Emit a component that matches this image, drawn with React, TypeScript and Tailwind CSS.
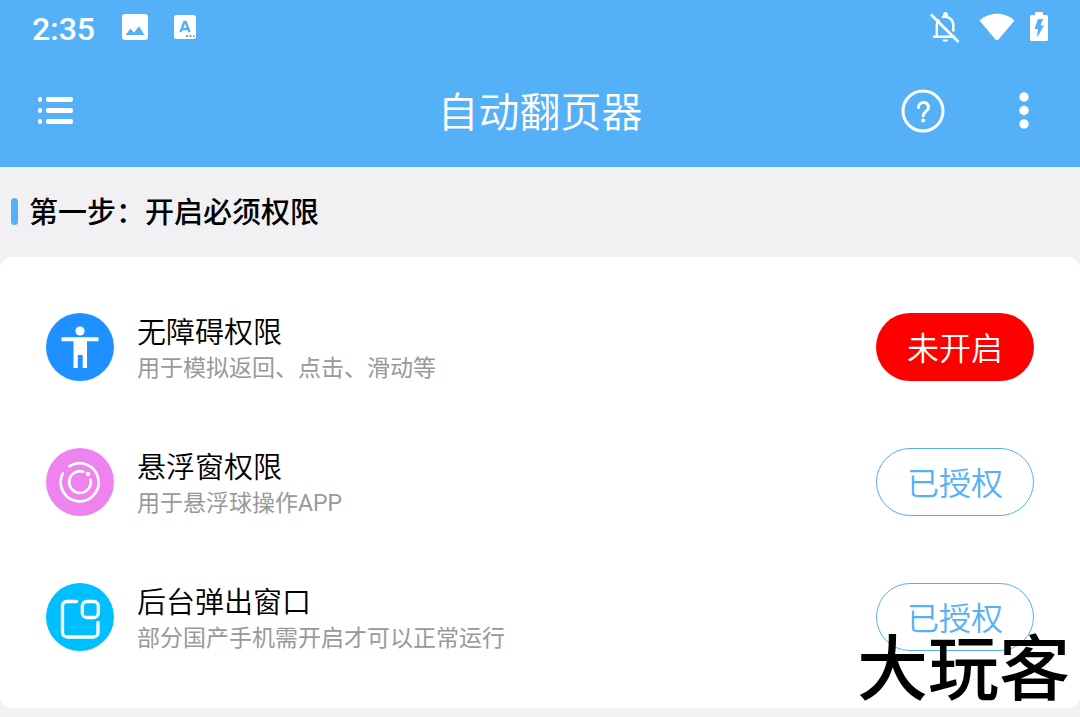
import type { ReactNode } from "react";

type Permission = {
  id: string;
  title: string;
  description: string;
  color: string;
  icon: ReactNode;
  granted: boolean;
};

function PersonIcon() {
  return (
    <svg viewBox="0 0 68 68" className="size-full" fill="#fff" aria-hidden="true">
      <circle cx="34" cy="18" r="4.600" />
      <path d="M15.500 24.300h37v4H41V55h-4.300V42h-4.900v13H27.500V28.300h-12z" />
    </svg>
  );
}

function FloatIcon() {
  return (
    <svg viewBox="0 0 68 68" className="size-full" fill="none" stroke="#fff" strokeWidth="2.700" strokeLinecap="round" aria-hidden="true">
      <path d="M23.500 18.200A19 19 0 1 1 16.800 25.500" />
      <path d="M37.300 23.700A10.800 10.800 0 1 0 44.500 31.500" />
      <circle cx="42" cy="26" r="2.300" fill="#fff" stroke="none" />
    </svg>
  );
}

function WindowIcon() {
  return (
    <svg viewBox="0 0 68 68" className="size-full" fill="none" stroke="#fff" strokeWidth="3.300" strokeLinecap="round" aria-hidden="true">
      <path d="M30.500 18.500H20.500a4 4 0 0 0-4 4V49.500a4.500 4.500 0 0 0 4.500 4.500H47.500a4.500 4.500 0 0 0 4.500-4.500V39.500" />
      <rect x="36.300" y="18.500" width="16" height="16" rx="4.500" />
    </svg>
  );
}

const permissions: Permission[] = [
  { id: "accessibility", title: "无障碍权限", description: "用于模拟返回、点击、滑动等", color: "bg-[#1e90ff]", icon: <PersonIcon />, granted: false },
  { id: "overlay", title: "悬浮窗权限", description: "用于悬浮球操作APP", color: "bg-[#ee82ee]", icon: <FloatIcon />, granted: true },
  { id: "popup", title: "后台弹出窗口", description: "部分国产手机需开启才可以正常运行", color: "bg-[#00bfff]", icon: <WindowIcon />, granted: true },
];

function StatusBar() {
  return (
    <div className="flex h-[54px] items-center justify-between px-8">
      <div className="flex items-center">
        <span className="w-[90px] pt-1 text-[32px] leading-8 font-medium">2:35</span>
        <svg viewBox="0 0 26 26" className="size-[26px]" aria-hidden="true">
          <rect width="26" height="26" rx="3" fill="#fff" />
          <path d="M3.500 21l5-6.500 3.500 4.200 5-6.400L22.500 21z" fill="#54b1f8" />
        </svg>
        <svg viewBox="0 0 22 24" className="ml-[26px] h-6 w-[22px]" aria-hidden="true">
          <rect width="22" height="24" rx="2.500" fill="#fff" />
          <path d="M6.500 17l3.800-10h1.400l3.800 10M8 14h6" fill="none" stroke="#54b1f8" strokeWidth="2.400" />
          <path d="M12 20h2v2h-2zM15.500 20h2v2h-2zM19 20h1.500v2H19z" fill="#54b1f8" />
        </svg>
      </div>
      <div className="flex items-center">
        <svg viewBox="0 0 30 32" className="h-8 w-[30px]" fill="none" stroke="#fff" strokeWidth="2.500" aria-hidden="true">
          <path d="M3 25.800h22M6.800 25V14.500c0-2.500.8-4.500 2.200-6M12 6.200c5.500-2 11.300 2 11.300 8.300v6" />
          <path d="M13.500 5.500V3.500a2 2 0 0 1 4 0v2z" fill="#fff" strokeWidth="1" />
          <path d="M12.500 28.500h5.500a2.700 2.200 0 0 1-5.500 0z" fill="#fff" stroke="none" />
          <path d="M1 3.500L28.500 31" strokeWidth="2.600" />
        </svg>
        <svg viewBox="0 0 36 28" className="ml-[19px] h-7 w-9" fill="#fff" aria-hidden="true">
          <path d="M.5 7.500C10-1.600 26-1.600 35.500 7.500L19.500 26.500Q18 28 16.500 26.500z" />
        </svg>
        <svg viewBox="0 0 18 30" className="ml-[15px] h-[30px] w-[18px]" aria-hidden="true">
          <path d="M5 0h8v3h3.500A1.500 1.500 0 0 1 18 4.500v23a1.500 1.500 0 0 1-1.500 1.500h-15A1.500 1.500 0 0 1 0 27.500v-23A1.500 1.500 0 0 1 1.500 3H5z" fill="#fff" />
          <path d="M8 7h5L10.500 13.500h3.500L6.800 26l1.200-9H4.500z" fill="#54b1f8" />
        </svg>
      </div>
    </div>
  );
}

function Toolbar() {
  return (
    <div className="grid h-[113px] grid-cols-[1fr_auto_1fr] items-center pr-[50px] pl-[38px]">
      <button type="button" aria-label="菜单" className="justify-self-start">
        <svg viewBox="0 0 36 28" className="h-7 w-9" fill="#fff" aria-hidden="true">
          {[0, 11, 22].map((y) => (
            <g key={y}>
              <rect x="0" y={y} width="4" height="5" rx="2" />
              <rect x="8" y={y} width="27" height="5" rx="2" />
            </g>
          ))}
        </svg>
      </button>
      <h1 className="pt-1 pl-3 text-[41px] leading-[48px] font-[350]">自动翻页器</h1>
      <div className="flex items-center gap-[73px] justify-self-end">
        <button type="button" aria-label="帮助">
          <svg viewBox="0 0 44 44" className="size-11" fill="none" stroke="#fff" strokeWidth="3" aria-hidden="true">
            <circle cx="22" cy="22" r="20" />
            <path d="M17.500 18.500c0-6.500 10-6.500 10-.3 0 4-5.200 4.300-5.200 8.500" strokeLinecap="round" />
            <circle cx="22.200" cy="31.500" r="2" fill="#fff" stroke="none" />
          </svg>
        </button>
        <button type="button" aria-label="更多">
          <svg viewBox="0 0 12 38" className="h-[38px] w-3" fill="#fff" aria-hidden="true">
            <circle cx="6" cy="5" r="4.700" />
            <circle cx="6" cy="18.500" r="4.700" />
            <circle cx="6" cy="32" r="4.700" />
          </svg>
        </button>
      </div>
    </div>
  );
}

function PermissionRow({ item }: { item: Permission }) {
  return (
    <li className="flex h-[135px] items-center justify-between px-[46px]">
      <div className="flex items-center gap-[23px]">
        <div className={`size-[68px] rounded-full ${item.color}`}>{item.icon}</div>
        <div className="pt-1">
          <h3 id={item.id} className="text-[29px] leading-10 font-[350] text-black">{item.title}</h3>
          <p className="text-[23px] leading-8 font-normal text-[#999999]">{item.description}</p>
        </div>
      </div>
      <button
        type="button"
        aria-describedby={item.id}
        className={
          item.granted
            ? "h-[68px] w-[158px] rounded-full border border-[#54b1f8] pt-1 text-[32px] leading-10 font-[350] text-[#54b1f8]"
            : "h-[68px] w-[158px] rounded-full bg-[#ff0000] pt-1 text-[32px] leading-10 font-[350] text-white"
        }
      >
        {item.granted ? "已授权" : "未开启"}
      </button>
    </li>
  );
}

export default function App() {
  return (
    <div className="relative min-h-screen bg-[#f1f1f3] font-['Roboto','Noto_Sans_CJK_SC',sans-serif]">
      <header className="bg-[#54b1f8] text-white">
        <StatusBar />
        <Toolbar />
      </header>
      <main>
        <div className="flex h-[90px] items-center gap-[11px] pb-0.5 pl-[11px]">
          <span className="h-[27px] w-[7px] rounded-full bg-[#54b1f8]" />
          <h2 className="pt-1 text-[29px] leading-10 font-medium text-black">第一步：开启必须权限</h2>
        </div>
        <ul className="rounded-xl bg-white pt-[22px] pb-6">
          {permissions.map((item) => (
            <PermissionRow key={item.id} item={item} />
          ))}
        </ul>
      </main>
      <div className="pointer-events-none absolute right-2.5 bottom-3 text-[71px] leading-[71px] font-medium text-black">大玩客</div>
    </div>
  );
}
